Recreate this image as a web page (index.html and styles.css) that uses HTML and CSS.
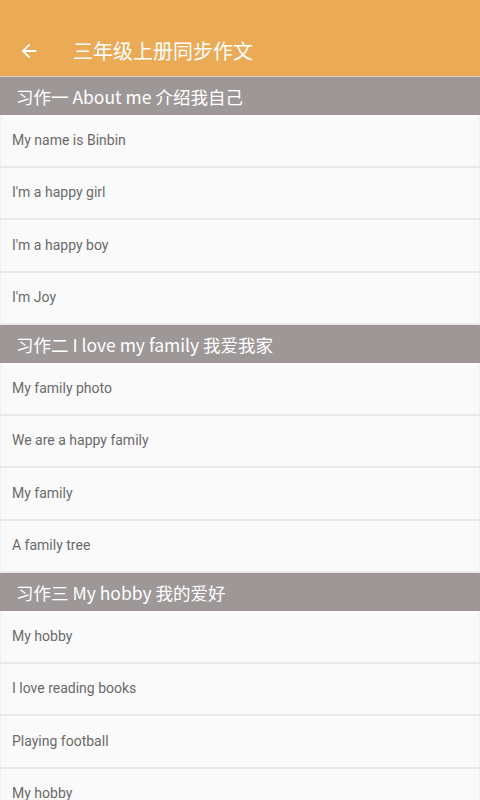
FILE: index.html
```html
<!DOCTYPE html>
<html lang="zh">
<head>
<meta charset="utf-8">
<title>三年级上册同步作文</title>
<link rel="stylesheet" href="styles.css">
</head>
<body>
<div class="app">
  <header class="appbar">
    <div class="status"></div>
    <div class="toolbar">
      <svg class="back" width="22" height="22" viewBox="0 0 24 24"><path d="M20 11H7.83l5.59-5.59L12 4l-8 8 8 8 1.41-1.41L7.83 13H20v-2z" fill="#fff"/></svg>
      <h1 class="title">三年级上册同步作文</h1>
    </div>
  </header>
  <div class="list">
    <div class="section">习作一 About me 介绍我自己</div>
    <div class="item">My name is Binbin</div>
    <div class="item">I'm a happy girl</div>
    <div class="item">I'm a happy boy</div>
    <div class="item">I'm Joy</div>
    <div class="section">习作二 I love my family 我爱我家</div>
    <div class="item">My family photo</div>
    <div class="item">We are a happy family</div>
    <div class="item">My family</div>
    <div class="item">A family tree</div>
    <div class="section">习作三 My hobby 我的爱好</div>
    <div class="item">My hobby</div>
    <div class="item">I love reading books</div>
    <div class="item">Playing football</div>
    <div class="item">My hobby</div>
  </div>
</div>
</body>
</html>
```
FILE: styles.css
```css
html, body {
  margin: 0;
  padding: 0;
  background: #fafafa;
  font-family: Roboto, "Noto Sans CJK SC", sans-serif;
}
.app {
  width: 480px;
  height: 800px;
  overflow: hidden;
  display: flex;
  flex-direction: column;
}
.appbar {
  background: #ebaa56;
  border-bottom: 1px solid #d9cfc2;
  flex: none;
}
.status {
  height: 25px;
}
.toolbar {
  height: 51px;
  display: flex;
  align-items: center;
  padding-left: 18px;
}
.back {
  display: block;
  flex: none;
}
.title {
  margin: 0 0 0 33px;
  font-family: "Noto Sans CJK SC", sans-serif;
  font-weight: 400;
  font-size: 20px;
  color: #fff;
}
.list {
  display: flex;
  flex-direction: column;
}
.section {
  height: 38px;
  background: #9d9897;
  color: #fff;
  font-family: "Noto Sans CJK SC", sans-serif;
  font-size: 17.5px;
  display: flex;
  align-items: center;
  padding-left: 16px;
  flex: none;
}
.item {
  box-sizing: border-box;
  height: 52.5px;
  border-bottom: 2px solid #e9e9e9;
  border-left: 1px solid #f0f0f0;
  border-right: 1px solid #f0f0f0;
  background: #fafafa;
  color: #6a6a6a;
  font-size: 14px;
  display: flex;
  align-items: center;
  padding: 0 0 1px 11px;
  flex: none;
}
```
